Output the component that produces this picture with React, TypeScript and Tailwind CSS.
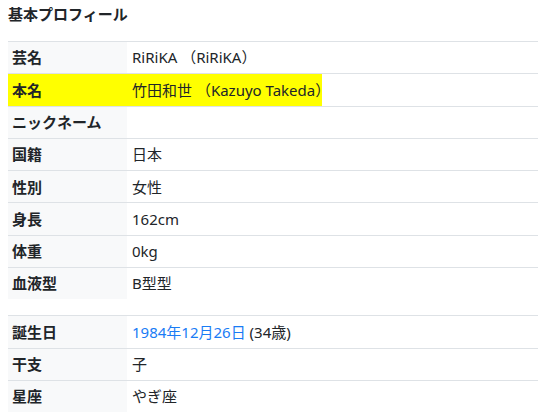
const font = { fontFamily: '"Noto Sans", "Noto Sans CJK JP", sans-serif' }

type Row = { label: string; value: React.ReactNode; highlight?: boolean }

const basic: Row[] = [
  { label: '芸名', value: 'RiRiKA （RiRiKA）' },
  { label: '本名', value: '竹田和世 （Kazuyo Takeda）', highlight: true },
  { label: 'ニックネーム', value: '' },
  { label: '国籍', value: '日本' },
  { label: '性別', value: '女性' },
  { label: '身長', value: '162cm' },
  { label: '体重', value: '0kg' },
  { label: '血液型', value: 'B型型' },
]

const birth: Row[] = [
  {
    label: '誕生日',
    value: (
      <span>
        <a className="text-[#1a7cf5]">1984年12月26日</a> (34歳)
      </span>
    ),
  },
  { label: '干支', value: '子' },
  { label: '星座', value: 'やぎ座' },
]

function ProfileTable({ rows }: { rows: Row[] }) {
  return (
    <div className="flex flex-col">
      {rows.map((r) => (
        <div key={r.label} className="flex border-t border-[#dee2e6] h-[32.3px]">
          <div
            className={`w-[119px] shrink-0 pl-[4px] flex items-center font-bold ${
              r.highlight ? 'bg-[#ffff00]' : 'bg-[#f8f9fa]'
            }`}
          >
            {r.label}
          </div>
          <div className="flex-1 flex">
            <div
              className={`flex items-center pl-[5px] whitespace-nowrap ${
                r.highlight ? 'bg-[#ffff00] w-[195px]' : ''
              }`}
            >
              {r.value}
            </div>
          </div>
        </div>
      ))}
    </div>
  )
}

export default function App() {
  return (
    <div className="w-[538px] h-[420px] overflow-hidden bg-white pl-2 text-[15px] text-[#212529]" style={font}>
      <div className="pt-[3px] leading-[22px] mb-[16px] font-bold">基本プロフィール</div>
      <ProfileTable rows={basic} />
      <div className="h-[16px]" />
      <ProfileTable rows={birth} />
    </div>
  )
}
